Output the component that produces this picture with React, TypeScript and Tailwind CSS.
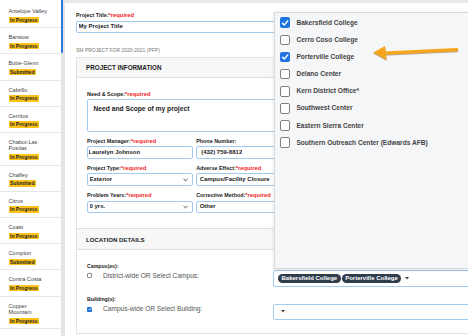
import type { ReactNode } from 'react';

const schools = [
  { name: 'Antelope Valley', status: 'In Progress' },
  { name: 'Barstow', status: 'In Progress' },
  { name: 'Butte-Glenn', status: 'Submitted' },
  { name: 'Cabrillo', status: 'In Progress' },
  { name: 'Cerritos', status: 'In Progress' },
  { name: 'Chabot-Las Positas', status: 'In Progress' },
  { name: 'Chaffey', status: 'Submitted' },
  { name: 'Citrus', status: 'In Progress' },
  { name: 'Coast', status: 'In Progress' },
  { name: 'Compton', status: 'Submitted' },
  { name: 'Contra Costa', status: 'In Progress' },
  { name: 'Copper Mountain', status: 'In Progress' },
  { name: 'Desert', status: 'In Progress' },
];

const campuses = [
  { name: 'Bakersfield College', checked: true },
  { name: 'Cerro Coso College', checked: false },
  { name: 'Porterville College', checked: true },
  { name: 'Delano Center', checked: false },
  { name: 'Kern District Office*', checked: false },
  { name: 'Southwest Center', checked: false },
  { name: 'Eastern Sierra Center', checked: false },
  { name: 'Southern Outreach Center (Edwards AFB)', checked: false },
];

function Label({ text, required }: { text: string; required?: boolean }) {
  return (
    <div className="mb-[2.5px] text-[5.4px] leading-[6px] font-bold text-[#222]">
      {text}
      {required && <span className="text-[5.8px] text-[#f01d1d]">*required</span>}
    </div>
  );
}

function Field({ children, select, className = '' }: { children: ReactNode; select?: boolean; className?: string }) {
  return (
    <div
      className={`flex h-[12.6px] items-center justify-between rounded-[2px] border border-[#a3cbf0] bg-white pr-[4px] text-[6px] font-bold text-[#222] ${className}`}
    >
      <span className="truncate">{children}</span>
      {select && (
        <svg width="5" height="4" viewBox="0 0 5 4" fill="none" stroke="#333" strokeWidth="0.9">
          <path d="M0.6 1l1.9 1.8 1.9-1.8" />
        </svg>
      )}
    </div>
  );
}

function PanelCheck({ checked }: { checked: boolean }) {
  if (checked) {
    return (
      <span className="flex h-[10.5px] w-[10.5px] items-center justify-center rounded-[2px] bg-[#1f74e0]">
        <svg width="8" height="8" viewBox="0 0 8 8" fill="none" stroke="white" strokeWidth="1.4" strokeLinecap="round" strokeLinejoin="round">
          <path d="M1.4 4.2l1.8 1.8 3.5-4" />
        </svg>
      </span>
    );
  }
  return <span className="h-[10.5px] w-[10.5px] rounded-[2px] border border-[#808080] bg-white" />;
}

export default function App() {
  return (
    <div className="flex h-[336px] w-[468px] overflow-hidden bg-white font-['Liberation_Sans',Arial,sans-serif]">
      {/* School list */}
      <aside className="w-[61px] shrink-0 overflow-hidden bg-white pt-[2px]">
        {schools.map((s) => (
          <div key={s.name} className="flex flex-col items-start border-b border-[#e6e6e6] pb-[4.2px] pl-[8.5px] pt-[6px]">
            <div className="w-[41px] text-[5.6px] leading-[6.5px] text-[#444]">{s.name}</div>
            <span className="mt-[2px] block rounded-[1px] bg-[#fcc11a] px-[1.5px] text-[5px] leading-[6.5px] font-bold text-[#222]">
              {s.status}
            </span>
          </div>
        ))}
      </aside>

      {/* Scrollbar */}
      <div className="w-[4px] shrink-0 bg-[#e4e4e4]">
        <div className="h-[53px] w-[2px] rounded-b-[1px] bg-[#2a7ae2]" />
      </div>

      {/* Form */}
      <main className="relative min-w-0 flex-1 overflow-hidden border-t-[3px] border-[#e8e8e8] bg-white">
        <div className="w-[560px] pl-[11px] pt-[9px]">
          <Label text="Project Title:" required />
          <Field className="pl-[1.5px]">My Project Title</Field>

          <div className="mt-[14.5px] text-[5px] leading-[5px] text-[#777]">SM PROJECT FOR 2020-2021 (PFP)</div>

          <div className="mt-[4px] border border-[#e3e3e3]">
            <div className="flex h-[20.6px] items-center border-b border-[#e0e0e0] bg-[#f7f7f7] pl-[9px] text-[6.3px] font-bold text-[#222]">
              PROJECT INFORMATION
            </div>
            <div className="pb-[15px] pl-[10px] pt-[12.5px]">
              <Label text="Need & Scope:" required />
              <div className="h-[32.7px] w-[300px] rounded-[2px] border border-[#a3cbf0] bg-white pl-[5.5px] pt-[5px] text-[6.7px] leading-[7px] font-bold text-[#222]">
                Need and Scope of my project
              </div>

              <div className="mt-[6px] grid grid-cols-[105.5px_105px] gap-x-[3.7px] gap-y-[6px]">
                <div>
                  <Label text="Project Manager:" required />
                  <Field className="pl-[0.5px]">Laurelyn Johnson</Field>
                </div>
                <div>
                  <Label text="Phone Number:" />
                  <Field className="pl-[4px]">(432) 759-8812</Field>
                </div>
                <div>
                  <Label text="Project Type:" required />
                  <Field select className="pl-[1.5px]">
                    Exterior
                  </Field>
                </div>
                <div>
                  <Label text="Adverse Effect:" required />
                  <Field className="pl-[2.5px]">Campus/Facility Closure</Field>
                </div>
                <div>
                  <Label text="Problem Years:" required />
                  <Field select className="pl-[1.5px]">
                    0 yrs.
                  </Field>
                </div>
                <div>
                  <Label text="Corrective Method:" required />
                  <Field className="pl-[2.5px]">Other</Field>
                </div>
              </div>
            </div>

            <div className="flex h-[22px] items-center border-y border-[#e0e0e0] bg-[#f7f7f7] pl-[9px] text-[6.1px] font-bold text-[#222]">
              LOCATION DETAILS
            </div>
            <div className="pb-[13px] pl-[10px] pt-[12.5px]">
              <div className="mb-[1.5px] text-[5.2px] leading-[6px] font-bold text-[#222]">Campus(es):</div>
              <div className="grid grid-cols-[182.5px_230px] gap-x-[3.5px]">
                <div className="flex h-[11px] items-center gap-[11px] pt-[0.5px]">
                  <span className="h-[5px] w-[5px] rounded-[1px] border border-[#8a8a8a] bg-white" />
                  <span className="text-[6.6px] text-[#555]">District-wide OR Select Campus:</span>
                </div>
                <div className="relative">
                  {/* open dropdown */}
                  <div className="absolute bottom-full left-[0.5px] mb-[1.5px] h-[257px] w-[230px] border border-[#d9d9d9] bg-[#f5f6f8] pl-[5px] pt-[1.5px] shadow-[0_1px_4px_rgba(0,0,0,0.12)]">
                    {campuses.map((c) => (
                      <div key={c.name} className="flex h-[17.15px] items-center gap-[6.4px]">
                        <PanelCheck checked={c.checked} />
                        <span className="text-[6.6px] font-bold text-[#444]">{c.name}</span>
                      </div>
                    ))}
                    {/* annotation arrow */}
                    <svg
                      className="absolute left-[95px] top-[29px] drop-shadow-[0_1px_0.5px_rgba(120,70,0,0.45)]"
                      width="92"
                      height="22"
                      viewBox="0 0 92 22"
                    >
                      <path d="M14 11.2L86.7 7.7" stroke="#f5a51e" strokeWidth="3.3" strokeLinecap="round" />
                      <polygon points="3.3,10.5 15,4 16.7,18" fill="#f5a51e" />
                    </svg>
                  </div>
                  <div className="flex h-[17px] items-center gap-[1px] rounded-[2px] border border-[#a3cbf0] bg-white pl-[4px]">
                    <span className="rounded-full bg-[#2f3d4c] px-[3.5px] text-[6px] leading-[9px] font-bold text-white">Bakersfield College</span>
                    <span className="rounded-full bg-[#2f3d4c] px-[3.5px] text-[6px] leading-[9px] font-bold text-white">Porterville College</span>
                    <svg className="ml-[3px]" width="4" height="3" viewBox="0 0 4 3">
                      <path d="M0 0h4L2 2.5z" fill="#444" />
                    </svg>
                  </div>
                </div>
              </div>

              <div className="mb-[1.5px] mt-[9px] text-[5.2px] leading-[6px] font-bold text-[#222]">Building(s):</div>
              <div className="grid grid-cols-[182.5px_230px] gap-x-[3.5px]">
                <div className="flex h-[11px] items-center gap-[11px] pt-[0.5px]">
                  <span className="flex h-[5px] w-[5px] items-center justify-center rounded-[1px] bg-[#1f74e0]">
                    <svg width="4" height="4" viewBox="0 0 4 4" fill="none" stroke="white" strokeWidth="0.8">
                      <path d="M0.7 2.1l0.9 0.9 1.7-2" />
                    </svg>
                  </span>
                  <span className="text-[6.6px] text-[#555]">Campus-wide OR Select Building:</span>
                </div>
                <div className="flex h-[16.5px] items-center rounded-[2px] border border-[#a3cbf0] bg-white pl-[7px]">
                  <svg width="4" height="3" viewBox="0 0 4 3">
                    <path d="M0 0h4L2 2.5z" fill="#444" />
                  </svg>
                </div>
              </div>
            </div>
          </div>
        </div>
      </main>
    </div>
  );
}
